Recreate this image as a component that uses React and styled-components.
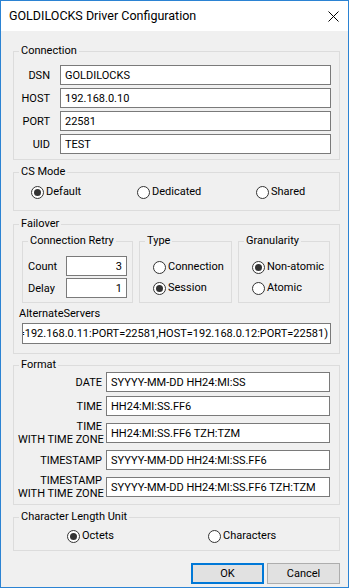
import React from 'react';
import styled, { createGlobalStyle, css } from 'styled-components';

const GlobalStyle = createGlobalStyle`
  html, body {
    margin: 0;
    padding: 0;
    background: #f0f0f0;
  }
  body {
    font-family: Roboto, "Noto Sans CJK KR", sans-serif;
    font-size: 11px;
    color: #000;
  }
  * { box-sizing: border-box; }
`;

const Window = styled.div`
  width: 349px;
  height: 588px;
  border: 1px solid #2b83d3;
  background: #f0f0f0;
  display: flex;
  flex-direction: column;
`;

const TitleBar = styled.div`
  height: 30px;
  flex: none;
  background: #fff;
  display: flex;
  align-items: center;
  justify-content: space-between;
  padding: 0 9px 0 8px;
`;

const Title = styled.span`
  font-size: 12.5px;
  line-height: 16px;
`;

const Body = styled.div`
  flex: 1;
  padding: 13px 8px 0 12px;
  display: flex;
  flex-direction: column;
`;

// group box (fieldset) - height fixed like the dialog resource
const Group = styled.fieldset`
  margin: ${p => p.$mt || 0}px 0 0;
  padding: 0;
  min-width: 0;
  height: ${p => p.$h}px;
  border: 1px solid #dcdcdc;
  flex: none;
`;

const Legend = styled.legend`
  margin-left: 5px;
  padding: 0 2px;
  font-size: 11px;
  line-height: 14px;
`;

const FieldGrid = styled.div`
  display: grid;
  grid-template-columns: ${p => p.$cols};
  column-gap: ${p => p.$colGap || 0}px;
  row-gap: ${p => p.$rowGap || 0}px;
  align-items: center;
  padding: ${p => p.$pad || 0};
`;

const FieldLabel = styled.span`
  text-align: ${p => (p.$left ? 'left' : 'right')};
  line-height: 13px;
  white-space: nowrap;
`;

const TextBox = styled.input`
  display: block;
  width: 100%;
  height: ${p => p.$h || 20}px;
  margin: 0;
  border: 1px solid #7a7a7a;
  background: #fff;
  font: inherit;
  font-size: 11px;
  color: #000;
  padding: 0 ${p => (p.$right ? '4px' : '2px')} 0 4px;
  text-align: ${p => (p.$right ? 'right' : 'left')};
  outline: none;
`;

// text box scrolled to its end, like the win32 edit control
const ScrolledBox = styled.div`
  height: 21px;
  margin: 1px 0 0;
  border: 1px solid #7a7a7a;
  background: #fff;
  display: flex;
  align-items: center;
  justify-content: flex-end;
  overflow: hidden;
  white-space: nowrap;
  padding: 0 2px;
`;

const RadioRow = styled.div`
  display: grid;
  grid-template-columns: ${p => p.$cols};
  padding: ${p => p.$pad};
`;

const RadioStack = styled.div`
  display: flex;
  flex-direction: column;
  gap: 5px;
  padding: ${p => p.$pad};
`;

const RadioLabel = styled.label`
  display: inline-flex;
  align-items: center;
  gap: 2px;
  line-height: 16px;
  white-space: nowrap;
`;

const RadioCircle = styled.span`
  width: 13px;
  height: 13px;
  flex: none;
  border-radius: 50%;
  border: 1px solid #333;
  background: #fff;
  display: flex;
  align-items: center;
  justify-content: center;
  ${p => p.$checked && css`
    &::after {
      content: '';
      width: 7px;
      height: 7px;
      border-radius: 50%;
      background: #333;
    }
  `}
`;

const Radio = ({ checked, children }) => (
  <RadioLabel>
    <RadioCircle $checked={checked} />
    {children}
  </RadioLabel>
);

const FailoverInner = styled.div`
  padding: 3px 8px 0;
`;

const SubGroups = styled.div`
  display: grid;
  grid-template-columns: 111px 93px 92px;
  column-gap: 6px;
`;

const PlainLabel = styled.div`
  line-height: 16px;
  margin: 3px 0 0 -3px;
`;

const ButtonRow = styled.div`
  display: flex;
  justify-content: flex-end;
  gap: 3px;
  margin-top: 12px;
`;

const Button = styled.button`
  width: 73px;
  height: 21px;
  margin: 0;
  padding: 0;
  font: inherit;
  font-size: 11px;
  color: #000;
  background: #e1e1e1;
  border: ${p => (p.$default ? '2px solid #0078d7' : '1px solid #adadad')};
`;

const CloseIcon = () => (
  <svg width="11" height="11" viewBox="0 0 11 11">
    <path d="M0.5 0.5 L10.5 10.5 M10.5 0.5 L0.5 10.5" stroke="#000" strokeWidth="1" fill="none" />
  </svg>
);

const connectionFields = [
  ['DSN', 'GOLDILOCKS'],
  ['HOST', '192.168.0.10'],
  ['PORT', '22581'],
  ['UID', 'TEST'],
];

const formatFields = [
  [['DATE'], 'SYYYY-MM-DD HH24:MI:SS'],
  [['TIME'], 'HH24:MI:SS.FF6'],
  [['TIME', 'WITH TIME ZONE'], 'HH24:MI:SS.FF6 TZH:TZM'],
  [['TIMESTAMP'], 'SYYYY-MM-DD HH24:MI:SS.FF6'],
  [['TIMESTAMP', 'WITH TIME ZONE'], 'SYYYY-MM-DD HH24:MI:SS.FF6 TZH:TZM'],
];

const App = () => {
  return (
    <>
      <GlobalStyle />
      <Window>
        <TitleBar>
          <Title>GOLDILOCKS Driver Configuration</Title>
          <CloseIcon />
        </TitleBar>
        <Body>
          <Group $h={116}>
            <Legend>Connection</Legend>
            <FieldGrid $cols="36px 271px" $colGap={10} $rowGap={3} $pad="7px 0 0 0">
              {connectionFields.map(([label, value]) => (
                <React.Fragment key={label}>
                  <FieldLabel>{label}</FieldLabel>
                  <TextBox readOnly value={value} />
                </React.Fragment>
              ))}
            </FieldGrid>
          </Group>

          <Group $h={46} $mt={5}>
            <Legend>CS Mode</Legend>
            <RadioRow $cols="106px 119px auto" $pad="5px 0 0 17px">
              <Radio checked>Default</Radio>
              <Radio>Dedicated</Radio>
              <Radio>Shared</Radio>
            </RadioRow>
          </Group>

          <Group $h={137} $mt={6}>
            <Legend>Failover</Legend>
            <FailoverInner>
              <SubGroups>
                <Group $h={69}>
                  <Legend>Connection Retry</Legend>
                  <FieldGrid $cols="38px 61px" $rowGap={2} $pad="8px 0 0 5px">
                    <FieldLabel $left>Count</FieldLabel>
                    <TextBox $right readOnly value="3" />
                    <FieldLabel $left>Delay</FieldLabel>
                    <TextBox $right readOnly value="1" />
                  </FieldGrid>
                </Group>
                <Group $h={69}>
                  <Legend>Type</Legend>
                  <RadioStack $pad="11px 0 0 13px">
                    <Radio>Connection</Radio>
                    <Radio checked>Session</Radio>
                  </RadioStack>
                </Group>
                <Group $h={69}>
                  <Legend>Granularity</Legend>
                  <RadioStack $pad="11px 0 0 13px">
                    <Radio checked>Non-atomic</Radio>
                    <Radio>Atomic</Radio>
                  </RadioStack>
                </Group>
              </SubGroups>
              <PlainLabel>AlternateServers</PlainLabel>
              <ScrolledBox>
                <span>(HOST=192.168.0.11:PORT=22581,HOST=192.168.0.12:PORT=22581)</span>
              </ScrolledBox>
            </FailoverInner>
          </Group>

          <Group $h={147} $mt={4}>
            <Legend>Format</Legend>
            <FieldGrid $cols="84px 224px" $colGap={4} $rowGap={4} $pad="0 0 0 4px">
              {formatFields.map(([lines, value]) => (
                <React.Fragment key={lines.join(' ')}>
                  <FieldLabel>
                    {lines.map((l, i) => (
                      <React.Fragment key={l}>
                        {i > 0 && <br />}
                        {l}
                      </React.Fragment>
                    ))}
                  </FieldLabel>
                  <TextBox readOnly value={value} />
                </React.Fragment>
              ))}
            </FieldGrid>
          </Group>

          <Group $h={41} $mt={5}>
            <Legend>Character Length Unit</Legend>
            <RadioRow $cols="141px auto" $pad="4px 0 0 53px">
              <Radio checked>Octets</Radio>
              <Radio>Characters</Radio>
            </RadioRow>
          </Group>

          <ButtonRow>
            <Button $default>OK</Button>
            <Button>Cancel</Button>
          </ButtonRow>
        </Body>
      </Window>
    </>
  );
};

export default App;
